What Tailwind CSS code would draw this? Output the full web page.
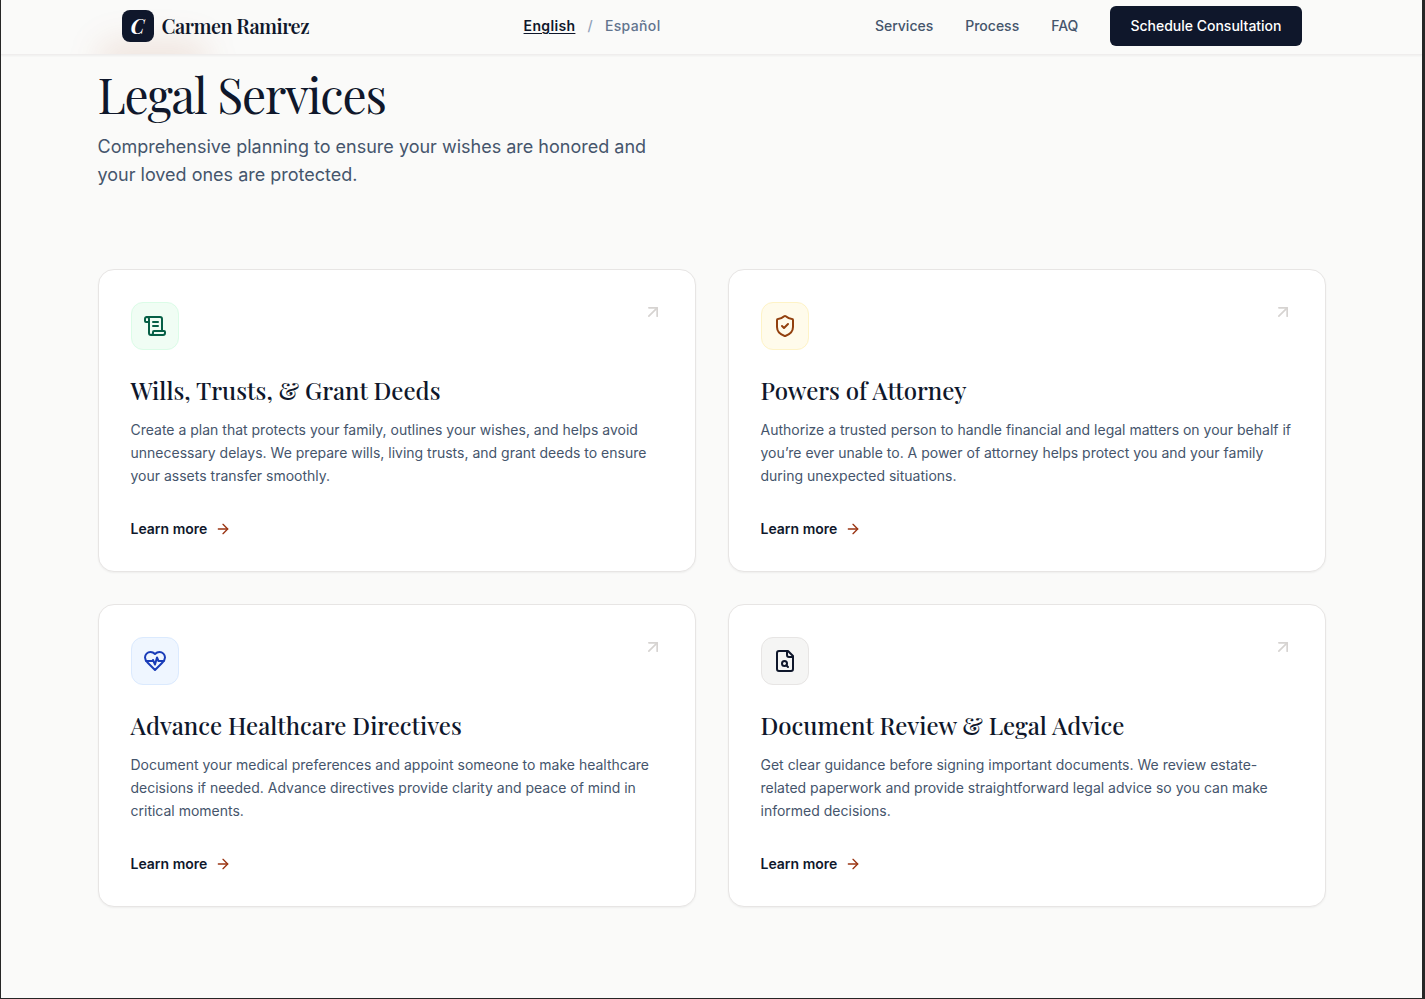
<!DOCTYPE html>
<html lang="en">
<head>
  <meta charset="UTF-8">
  <meta name="viewport" content="width=device-width, initial-scale=1.0">
  <title>Carmen Ramirez | Legal Services</title>
  <script src="https://cdn.jsdelivr.net/npm/@tailwindcss/browser@4"></script>
</head>
<body class="min-h-screen bg-stone-50 border-l border-b border-r-3 border-[#262626] font-['Inter',sans-serif] text-slate-900">
  <header class="sticky top-0 z-10 overflow-hidden bg-stone-50 border-b border-stone-200/60 shadow-xs">
    <div class="absolute left-24 top-10 h-10 w-28 rounded-full bg-orange-800/10 blur-lg"></div>
    <div class="relative mx-auto flex max-w-[1228px] items-center justify-between px-6 pt-1.5 pb-2">
      <a href="#" class="flex items-center gap-2">
        <span class="flex size-8 items-center justify-center rounded-lg bg-slate-900 font-['Playfair_Display','Liberation_Serif',serif] text-xl font-bold italic text-white">C</span>
        <span class="font-['Playfair_Display','Liberation_Serif',serif] text-xl font-semibold tracking-tight">Carmen Ramirez</span>
      </a>
      <div class="flex items-center gap-3 text-sm font-medium tracking-wide">
        <a href="#" class="font-semibold underline underline-offset-2">English</a>
        <span class="text-slate-400">/</span>
        <a href="#" class="text-slate-500">Español</a>
      </div>
      <nav class="flex items-center gap-8 text-sm font-medium text-slate-600">
        <a href="#services">Services</a>
        <a href="#process">Process</a>
        <a href="#faq">FAQ</a>
        <button type="button" class="h-10 rounded-md bg-slate-900 px-5 font-medium text-white">Schedule Consultation</button>
      </nav>
    </div>
  </header>

  <main id="services" class="mx-auto max-w-[1228px] pt-4 pb-[91px]">
    <h1 class="font-['Playfair_Display','Liberation_Serif',serif] text-5xl leading-[46px] tracking-tight">Legal Services</h1>
    <p class="mt-4 max-w-xl text-lg leading-7 text-slate-600">Comprehensive planning to ensure your wishes are honored and your loved ones are protected.</p>

    <div class="mt-20 grid grid-cols-2 gap-8">
      <article class="relative rounded-2xl border border-stone-200 bg-white p-8 shadow-xs">
        <svg class="absolute top-8 right-8 size-5 text-stone-300" viewBox="0 0 24 24" fill="none" stroke="currentColor" stroke-width="2" stroke-linecap="round" stroke-linejoin="round"><path d="M7 7h10v10"/><path d="M7 17 17 7"/></svg>
        <div class="flex size-12 items-center justify-center rounded-xl border border-green-100 bg-green-50 text-[#065f46]">
          <svg class="size-6" viewBox="0 0 24 24" fill="none" stroke="currentColor" stroke-width="2" stroke-linecap="round" stroke-linejoin="round"><path d="M15 12h-5"/><path d="M15 8h-5"/><path d="M19 17V5a2 2 0 0 0-2-2H4"/><path d="M8 21h12a2 2 0 0 0 2-2v-1a1 1 0 0 0-1-1H11a1 1 0 0 0-1 1v1a2 2 0 1 1-4 0V5a2 2 0 1 0-4 0v2a1 1 0 0 0 1 1h3"/></svg>
        </div>
        <h2 class="mt-6 font-['Playfair_Display','Liberation_Serif',serif] text-2xl leading-8 font-medium">Wills, Trusts, &amp; Grant Deeds</h2>
        <p class="mt-3 text-sm leading-[23px] text-slate-600">Create a plan that protects your family, outlines your wishes, and helps avoid unnecessary delays. We prepare wills, living trusts, and grant deeds to ensure your assets transfer smoothly.</p>
        <a href="#" class="mt-8 flex items-center gap-2 text-sm font-semibold">Learn more
          <svg class="size-4 text-[#9a3412]" viewBox="0 0 24 24" fill="none" stroke="currentColor" stroke-width="2" stroke-linecap="round" stroke-linejoin="round"><path d="M5 12h14"/><path d="m12 5 7 7-7 7"/></svg>
        </a>
      </article>

      <article class="relative rounded-2xl border border-stone-200 bg-white p-8 shadow-xs">
        <svg class="absolute top-8 right-8 size-5 text-stone-300" viewBox="0 0 24 24" fill="none" stroke="currentColor" stroke-width="2" stroke-linecap="round" stroke-linejoin="round"><path d="M7 7h10v10"/><path d="M7 17 17 7"/></svg>
        <div class="flex size-12 items-center justify-center rounded-xl border border-amber-100 bg-amber-50 text-[#92400e]">
          <svg class="size-6" viewBox="0 0 24 24" fill="none" stroke="currentColor" stroke-width="2" stroke-linecap="round" stroke-linejoin="round"><path d="M20 13c0 5-3.5 7.5-7.66 8.95a1 1 0 0 1-.67-.01C7.5 20.5 4 18 4 13V6a1 1 0 0 1 1-1c2 0 4.5-1.2 6.24-2.72a1.17 1.17 0 0 1 1.52 0C14.51 3.81 17 5 19 5a1 1 0 0 1 1 1z"/><path d="m9 12 2 2 4-4"/></svg>
        </div>
        <h2 class="mt-6 font-['Playfair_Display','Liberation_Serif',serif] text-2xl leading-8 font-medium">Powers of Attorney</h2>
        <p class="mt-3 text-sm leading-[23px] text-slate-600">Authorize a trusted person to handle financial and legal matters on your behalf if you’re ever unable to. A power of attorney helps protect you and your family during unexpected situations.</p>
        <a href="#" class="mt-8 flex items-center gap-2 text-sm font-semibold">Learn more
          <svg class="size-4 text-[#9a3412]" viewBox="0 0 24 24" fill="none" stroke="currentColor" stroke-width="2" stroke-linecap="round" stroke-linejoin="round"><path d="M5 12h14"/><path d="m12 5 7 7-7 7"/></svg>
        </a>
      </article>

      <article class="relative rounded-2xl border border-stone-200 bg-white p-8 shadow-xs">
        <svg class="absolute top-8 right-8 size-5 text-stone-300" viewBox="0 0 24 24" fill="none" stroke="currentColor" stroke-width="2" stroke-linecap="round" stroke-linejoin="round"><path d="M7 7h10v10"/><path d="M7 17 17 7"/></svg>
        <div class="flex size-12 items-center justify-center rounded-xl border border-blue-100 bg-blue-50 text-blue-800">
          <svg class="size-6" viewBox="0 0 24 24" fill="none" stroke="currentColor" stroke-width="2" stroke-linecap="round" stroke-linejoin="round"><path d="M19 14c1.49-1.46 3-3.21 3-5.5A5.5 5.5 0 0 0 16.5 3c-1.76 0-3 .5-4.5 2-1.5-1.5-2.74-2-4.5-2A5.5 5.5 0 0 0 2 8.5c0 2.3 1.5 4.05 3 5.5l7 7Z"/><path d="M3.22 12H9.5l.5-1 2 4.5 2-7 1.5 3.5h5.27"/></svg>
        </div>
        <h2 class="mt-6 font-['Playfair_Display','Liberation_Serif',serif] text-2xl leading-8 font-medium">Advance Healthcare Directives</h2>
        <p class="mt-3 text-sm leading-[23px] text-slate-600">Document your medical preferences and appoint someone to make healthcare decisions if needed. Advance directives provide clarity and peace of mind in critical moments.</p>
        <a href="#" class="mt-8 flex items-center gap-2 text-sm font-semibold">Learn more
          <svg class="size-4 text-[#9a3412]" viewBox="0 0 24 24" fill="none" stroke="currentColor" stroke-width="2" stroke-linecap="round" stroke-linejoin="round"><path d="M5 12h14"/><path d="m12 5 7 7-7 7"/></svg>
        </a>
      </article>

      <article class="relative rounded-2xl border border-stone-200 bg-white p-8 shadow-xs">
        <svg class="absolute top-8 right-8 size-5 text-stone-300" viewBox="0 0 24 24" fill="none" stroke="currentColor" stroke-width="2" stroke-linecap="round" stroke-linejoin="round"><path d="M7 7h10v10"/><path d="M7 17 17 7"/></svg>
        <div class="flex size-12 items-center justify-center rounded-xl border border-stone-200 bg-stone-100 text-slate-900">
          <svg class="size-6" viewBox="0 0 24 24" fill="none" stroke="currentColor" stroke-width="2" stroke-linecap="round" stroke-linejoin="round"><path d="M15 2H6a2 2 0 0 0-2 2v16a2 2 0 0 0 2 2h12a2 2 0 0 0 2-2V7Z"/><path d="M14 2v4a2 2 0 0 0 2 2h4"/><circle cx="11.5" cy="14.5" r="2.5"/><path d="M13.3 16.3 15 18"/></svg>
        </div>
        <h2 class="mt-6 font-['Playfair_Display','Liberation_Serif',serif] text-2xl leading-8 font-medium">Document Review &amp; Legal Advice</h2>
        <p class="mt-3 text-sm leading-[23px] text-slate-600">Get clear guidance before signing important documents. We review estate-related paperwork and provide straightforward legal advice so you can make informed decisions.</p>
        <a href="#" class="mt-8 flex items-center gap-2 text-sm font-semibold">Learn more
          <svg class="size-4 text-[#9a3412]" viewBox="0 0 24 24" fill="none" stroke="currentColor" stroke-width="2" stroke-linecap="round" stroke-linejoin="round"><path d="M5 12h14"/><path d="m12 5 7 7-7 7"/></svg>
        </a>
      </article>
    </div>
  </main>
</body>
</html>
